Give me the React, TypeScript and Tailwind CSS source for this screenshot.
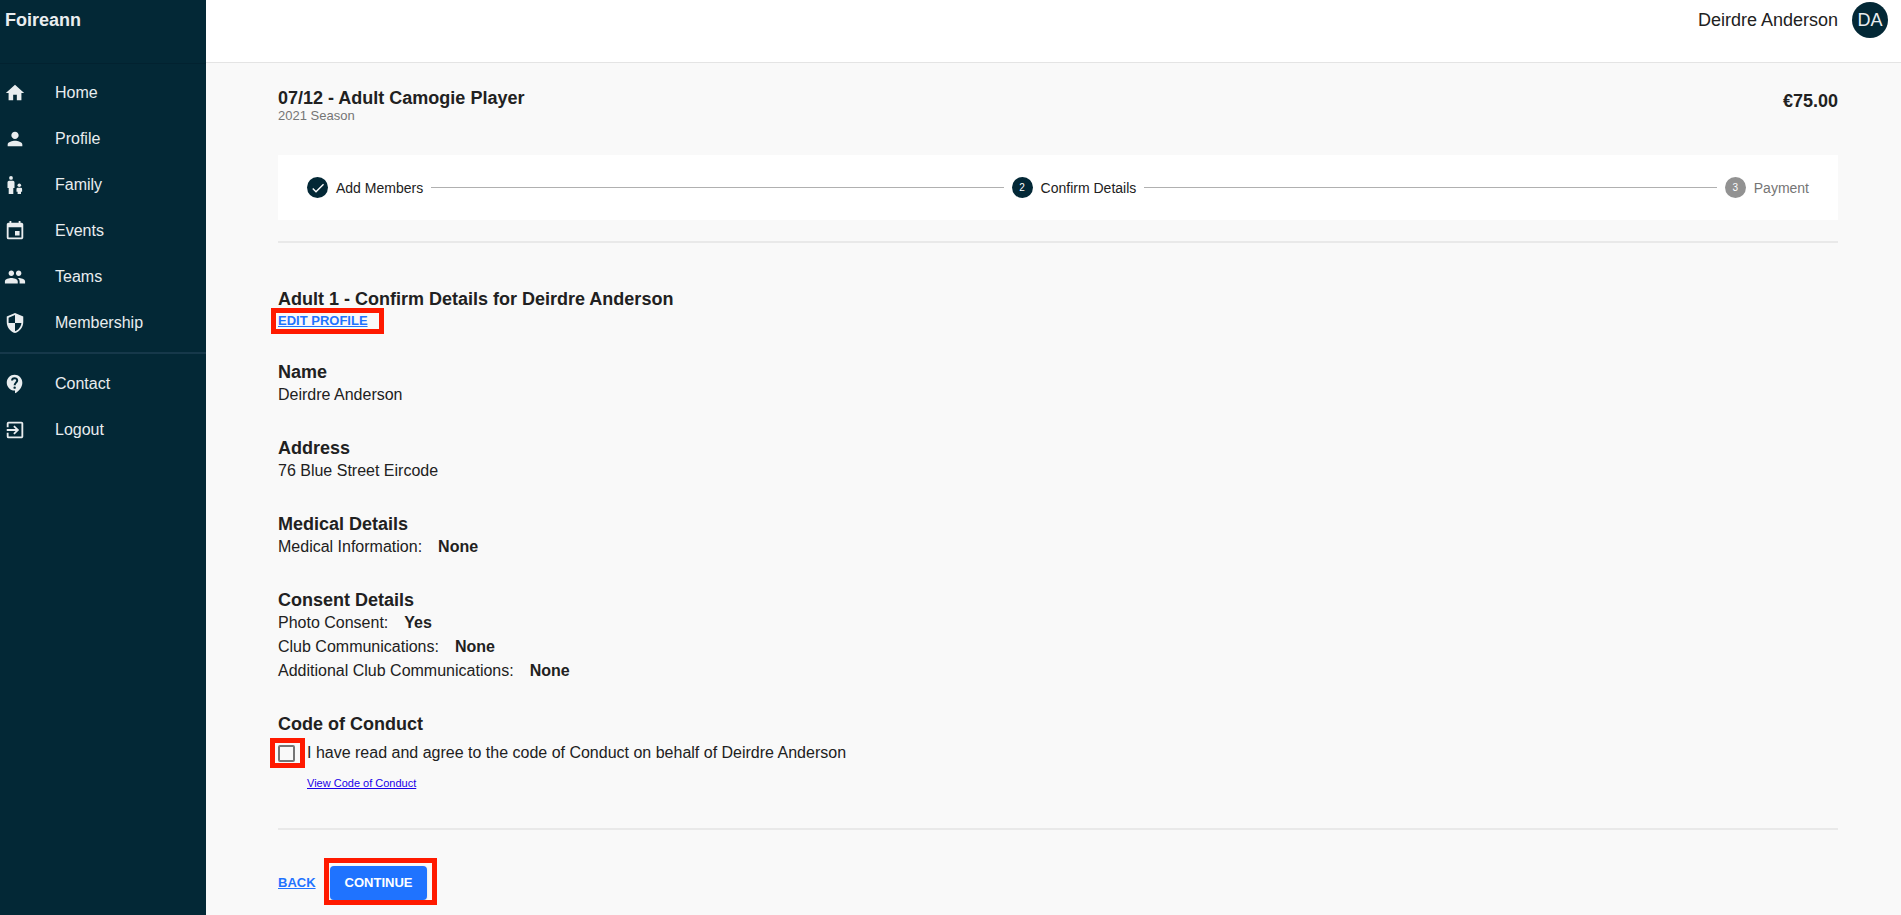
import { useState } from 'react';
import type { ComponentType, ReactNode } from 'react';
import { MdCheck, MdEvent, MdExitToApp, MdHome, MdPeople, MdPerson, MdSecurity } from 'react-icons/md';
import clsx from 'clsx';

type NavItem = { label: string; icon: ComponentType<{ className?: string }> };

function FamilyIcon({ className }: { className?: string }) {
    return (
        <svg viewBox="0 0 22 22" fill="currentColor" className={className}>
            <circle cx="7" cy="3.9" r="1.9" />
            <path d="M5 6.8h4a1.5 1.5 0 0 1 1.5 1.5V14h-1.2v6H4.7v-6H3.5V8.300a1.500 1.500 0 0 1 1.500-1.500z" />
            <circle cx="15.300" cy="11.300" r="1.800" />
            <path d="M13.700 13.700h3.200a1.200 1.200 0 0 1 1.200 1.200v2.900H17V20h-3.400v-2.200h-1.100v-2.900a1.200 1.200 0 0 1 1.200-1.200z" />
        </svg>
    );
}

function ContactIcon({ className }: { className?: string }) {
    return (
        <svg viewBox="0 0 24 24" className={className}>
            <path
                fill="currentColor"
                d="M11.500 2C6.810 2 3 5.810 3 10.500S6.810 19 11.500 19h.5v3c4.860-2.340 8-7 8-11.500C20 5.810 16.190 2 11.500 2z"
            />
            <path d="M8.800 8.300c0-3.500 5.600-3.500 5.600-.1 0 2.200-2.800 2.500-2.800 5.200" fill="none" stroke="#032836" strokeWidth="2.200" />
            <circle cx="11.600" cy="16" r="1.300" fill="#032836" />
        </svg>
    );
}

const mainNav: NavItem[] = [
    { label: 'Home', icon: MdHome },
    { label: 'Profile', icon: MdPerson },
    { label: 'Family', icon: FamilyIcon },
    { label: 'Events', icon: MdEvent },
    { label: 'Teams', icon: MdPeople },
    { label: 'Membership', icon: MdSecurity },
];

const secondaryNav: NavItem[] = [
    { label: 'Contact', icon: ContactIcon },
    { label: 'Logout', icon: MdExitToApp },
];

function NavList({ items }: { items: NavItem[] }) {
    return (
        <ul>
            {items.map(({ label, icon: Icon }) => (
                <li key={label}>
                    <a href="#" className="flex h-[46px] items-center gap-[29px] pl-1 text-base text-[#e9edef]">
                        <Icon className="size-[22px]" />
                        {label}
                    </a>
                </li>
            ))}
        </ul>
    );
}

function Sidebar() {
    return (
        <aside className="w-[206px] shrink-0 bg-[#032836]">
            <div className="h-16 border-b border-[#022230] pt-2 pl-[5px] text-lg leading-6 font-bold text-[#e9edef]">
                Foireann
            </div>
            <nav className="pt-[6px]">
                <NavList items={mainNav} />
                <hr className="mt-[6px] mb-[7px] border-t-2 border-[#16384a]" />
                <NavList items={secondaryNav} />
            </nav>
        </aside>
    );
}

function Step({ marker, label, muted }: { marker: ReactNode; label: string; muted?: boolean }) {
    return (
        <li className="flex items-center gap-2">
            <span
                className={clsx(
                    'flex size-[21px] items-center justify-center rounded-full text-[10px] text-white',
                    muted ? 'bg-[#929292]' : 'bg-[#032836]',
                )}
            >
                {marker}
            </span>
            <span className={clsx('text-sm', muted ? 'text-[#757575]' : 'text-[#212121]')}>{label}</span>
        </li>
    );
}

function Stepper() {
    return (
        <ol className="mt-8 flex h-[65px] items-center gap-2 bg-white px-[29px]">
            <Step marker={<MdCheck className="size-4" />} label="Add Members" />
            <li aria-hidden className="h-px flex-1 bg-[#b0b0b0]" />
            <Step marker="2" label="Confirm Details" />
            <li aria-hidden className="h-px flex-1 bg-[#b0b0b0]" />
            <Step marker="3" label="Payment" muted />
        </ol>
    );
}

function Group({ title, children }: { title: string; children: ReactNode }) {
    return (
        <section className="mb-[30px]">
            <h3 className="text-lg leading-[22px] font-bold">{title}</h3>
            {children}
        </section>
    );
}

function Field({ label, value }: { label: string; value: string }) {
    return (
        <p className="flex gap-4 leading-6">
            {label}: <strong>{value}</strong>
        </p>
    );
}

// red frame drawn over the control it wraps
function Highlight({ className, children }: { className: string; children: ReactNode }) {
    return (
        <span className="relative flex w-fit">
            {children}
            <span className={clsx('pointer-events-none absolute border-[5px] border-[#ff1a00]', className)} />
        </span>
    );
}

export default function App() {
    const [agreed, setAgreed] = useState(false);

    return (
        <div className="flex min-h-screen bg-[#f9f9f9] font-['Liberation_Sans',Arial,sans-serif] text-base text-[#212121]">
            <Sidebar />

            <div className="min-w-0 flex-1">
                <header className="flex h-[63px] items-start justify-end gap-[14px] border-b border-[#e4e4e4] bg-white pt-[2px] pr-[13px]">
                    <span className="text-lg leading-9">Deirdre Anderson</span>
                    <span className="flex size-9 items-center justify-center rounded-full bg-[#032836] text-lg text-[#e9edef]">
                        DA
                    </span>
                </header>

                <main className="pt-6 pr-[63px] pl-[72px]">
                    <div className="flex items-start justify-between">
                        <div>
                            <h1 className="text-lg leading-[22px] font-bold">07/12 - Adult Camogie Player</h1>
                            <p className="text-[13px] leading-[14px] text-[#757575]">2021 Season</p>
                        </div>
                        <span className="text-lg leading-7 font-bold">€75.00</span>
                    </div>

                    <Stepper />

                    <hr className="mt-[21px] mb-[45px] border-t-2 border-[#e9e9e9]" />

                    <h2 className="text-lg leading-[22px] font-bold">Adult 1 - Confirm Details for Deirdre Anderson</h2>
                    <div className="mb-[30px] pt-px">
                        <Highlight className="-top-[3px] -right-4 -bottom-[3px] -left-[7px]">
                            <a href="#" className="text-[13px] leading-5 font-bold text-[#1f73ff] underline">
                                EDIT PROFILE
                            </a>
                        </Highlight>
                    </div>

                    <Group title="Name">
                        <p className="leading-6">Deirdre Anderson</p>
                    </Group>
                    <Group title="Address">
                        <p className="leading-6">76 Blue Street Eircode</p>
                    </Group>
                    <Group title="Medical Details">
                        <Field label="Medical Information" value="None" />
                    </Group>
                    <Group title="Consent Details">
                        <Field label="Photo Consent" value="Yes" />
                        <Field label="Club Communications" value="None" />
                        <Field label="Additional Club Communications" value="None" />
                    </Group>

                    <section>
                        <h3 className="text-lg leading-[22px] font-bold">Code of Conduct</h3>
                        <div className="mt-[6px] flex items-center gap-3">
                            <Highlight className="-top-[7px] -right-[10px] -bottom-[6px] -left-2">
                                <input
                                    id="agree"
                                    type="checkbox"
                                    checked={agreed}
                                    onChange={(e) => setAgreed(e.target.checked)}
                                    className="size-[17px] appearance-none rounded-[2px] border-2 border-[#757575] checked:bg-[#1f73ff]"
                                />
                            </Highlight>
                            <label htmlFor="agree" className="leading-6">
                                I have read and agree to the code of Conduct on behalf of Deirdre Anderson
                            </label>
                        </div>
                        <a href="#" className="mt-[10px] ml-[29px] block w-fit text-[11px] leading-4 text-[#1a00e8] underline">
                            View Code of Conduct
                        </a>
                    </section>

                    <hr className="mt-[37px] mb-9 border-t-2 border-[#e9e9e9]" />

                    <div className="flex items-center gap-[14px] pb-[10px]">
                        <a href="#" className="text-[13px] font-bold text-[#1f73ff] underline">
                            BACK
                        </a>
                        <Highlight className="-top-2 -right-[10px] -bottom-[5px] -left-[6px]">
                            <button
                                type="button"
                                className="h-[34px] rounded bg-[#1f73ff] px-[15px] text-[13px] font-bold text-white shadow-sm"
                            >
                                CONTINUE
                            </button>
                        </Highlight>
                    </div>
                </main>
            </div>
        </div>
    );
}
